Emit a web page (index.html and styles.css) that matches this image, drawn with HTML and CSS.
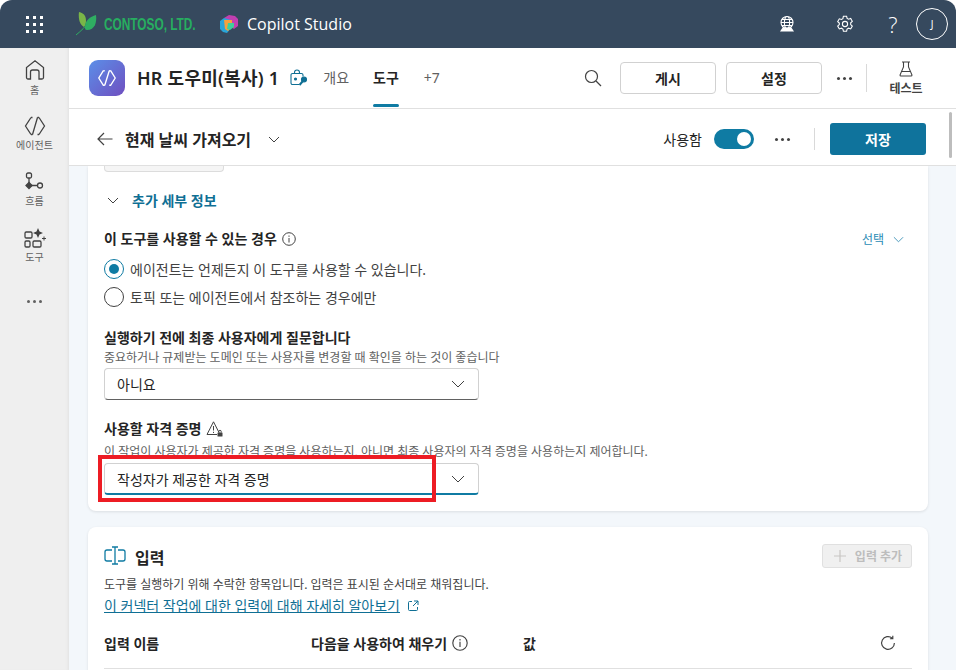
FILE: index.html
```html
<!DOCTYPE html>
<html lang="ko">
<head>
<meta charset="utf-8">
<title>Copilot Studio</title>
<link rel="stylesheet" href="styles.css">
</head>
<body>
<div class="app">
  <header class="topbar">
    <div class="waffle"><i></i><i></i><i></i><i></i><i></i><i></i><i></i><i></i><i></i></div>
    <svg class="leaf" width="22" height="26" viewBox="0 0 22 26"><path d="M3 1c5 1 7 4 7 9 0 3-1 5-2 6C4 14 2 8 3 1z" fill="#7ab648"/><path d="M20 4c1 7-1 15-9 15-2 0-2-1-2-3 0-7 5-10 11-12z" fill="#2fae62"/><path d="M0 24C5 20 10 15 15 9" stroke="#2fae62" stroke-width="1" fill="none"/></svg>
    <span class="contoso"><span>CONTOSO, LTD.</span></span>
    <svg class="cs-logo" width="18" height="18" viewBox="0 0 18 18"><path d="M4 3l5-3 6 1 3 3v7l-4 3-5-4z" fill="#c13fb0"/><path d="M0 6l4-3 7 2v8l-4 5-4-1-3-3z" fill="#2aa5d8"/><path d="M4 5h8v7l-4 4-3-2z" fill="#f7a03c"/><path d="M8 8h6v4l-4 3-3-1z" fill="#3fcf9a"/></svg>
    <span class="product">Copilot Studio</span>
    <div class="top-actions">
      <svg class="t-globe" width="18" height="18" viewBox="0 0 18 18" fill="none" stroke="#fff" stroke-width="1.1"><circle cx="9" cy="7.5" r="6"/><ellipse cx="9" cy="7.5" rx="2.6" ry="6"/><path d="M3 7.5h12M4 4.5h10M4 10.5h10"/><path d="M3 16h12l-2-3H5z" fill="#fff"/></svg>
      <svg class="t-gear" width="18" height="18" viewBox="0 0 18 18" fill="none" stroke="#fff" stroke-width="1.1"><path d="M7.4 1.2h3.2l.5 2.2 1.5.8 2.1-.7 1.6 2.8-1.6 1.5v1.8l1.6 1.5-1.6 2.8-2.1-.7-1.5.8-.5 2.2H7.4l-.5-2.2-1.5-.8-2.1.7-1.6-2.8 1.6-1.5V8.1L1.7 6.6l1.6-2.8 2.1.7 1.5-.8z"/><circle cx="9" cy="9" r="2.6"/></svg>
      <span class="t-help">?</span>
      <span class="avatar">J</span>
    </div>
  </header>
  <div class="below">
    <nav class="rail">
      <div class="rail-item home"><svg width="22" height="22" viewBox="0 0 22 22" fill="none" stroke="#424242" stroke-width="1.3"><path d="M2.5 18.5V8.6L11 1.8l8.500 6.800v9.900a1.500 1.500 0 0 1-1.500 1.500h-3V13a2 2 0 0 0-2-2H8.500a2 2 0 0 0-2 2v7H4a1.500 1.500 0 0 1-1.500-1.500z"/></svg><span>홈</span></div>
      <div class="rail-item"><svg width="22" height="20" viewBox="0 0 22 20" fill="none" stroke="#424242" stroke-width="1.3"><path d="M7 1.500 1.500 10 7 18.500M15 1.500 20.500 10 15 18.500M13.500 1.500 8.500 18.500M7 1.500h1.500M13.500 1.500H15M7 18.500h1.500M13.500 18.500H15"/></svg><span>에이전트</span></div>
      <div class="rail-item"><svg width="20" height="20" viewBox="0 0 20 20" fill="none" stroke="#424242" stroke-width="1.300"><rect x="1.500" y="1" width="5" height="5" rx="1.500"/><path d="M4 6v5.500M6 13.500h6"/><rect x="12.500" y="11" width="5" height="5" rx="2.500"/><path d="M4 10.500l3 3-3 3-3-3z" fill="#424242"/></svg><span>흐름</span></div>
      <div class="rail-item"><svg width="22" height="20" viewBox="0 0 22 20" fill="none" stroke="#424242" stroke-width="1.300"><rect x="1" y="4" width="7" height="6" rx="1.200"/><rect x="1" y="13" width="5" height="6" rx="1.200"/><rect x="9" y="13" width="8" height="6" rx="1.200"/><path d="M14 0l1.500 3.500L19 5l-3.500 1.500L14 10l-1.500-3.500L9 5l3.500-1.500z" fill="#424242" stroke="none"/><path d="M20 8.500v4M18 10.500h4" stroke-width="1"/></svg><span>도구</span></div>
      <div class="rail-more"><i></i><i></i><i></i></div>
    </nav>
    <main class="main">
      <section class="agentbar">
        <div class="agent-logo"><svg width="20" height="20" viewBox="0 0 22 20" fill="none" stroke="#fff" stroke-width="1.500"><path d="M7 2 2 10l5 8h1.500M15 2l5 8-5 8h-1.500M13.500 2 8.500 18M7 2h1.500M13.500 2H15"/></svg></div>
        <h1 class="agent-name">HR 도우미(복사) 1</h1>
        <svg class="agent-lock" width="18" height="18" viewBox="0 0 18 18" fill="none" stroke="#0f6f94" stroke-width="1.100"><path d="M4.500 4.500V3.500a2.500 2.500 0 0 1 5 0v1M9 15.500H2.500a1.500 1.500 0 0 1-1.500-1.500V6a1.500 1.500 0 0 1 1.500-1.500h9A1.500 1.500 0 0 1 13 6v1.500"/><circle cx="5.500" cy="10" r="1" fill="#0f6f94"/><circle cx="14" cy="10.500" r="2.500" fill="#0f6f94"/><path d="M12.500 12.500 9.500 16" stroke-width="2"/></svg>
        <a class="tab">개요</a>
        <a class="tab tab-active">도구</a>
        <a class="tab">+7</a>
        <div class="agent-actions">
          <svg class="search" width="18" height="18" viewBox="0 0 18 18" fill="none" stroke="#424242" stroke-width="1.200"><circle cx="7.500" cy="7.500" r="6"/><path d="M12 12l5 5"/></svg>
          <button class="btn">게시</button>
          <button class="btn">설정</button>
          <div class="dots dark"><i></i><i></i><i></i></div>
          <div class="vr"></div>
          <div class="test"><svg width="16" height="16" viewBox="0 0 16 16" fill="none" stroke="#424242" stroke-width="1.100"><path d="M4 1h8M5.500 1v5L2 14a1 1 0 0 0 1 1h10a1 1 0 0 0 1-1l-3.500-8V1M4 10.500h8"/></svg><span>테스트</span></div>
        </div>
      </section>
      <section class="subbar">
        <svg class="back" width="16" height="14" viewBox="0 0 16 14" fill="none" stroke="#424242" stroke-width="1.200"><path d="M15.500 7H1M7 1 1 7l6 6"/></svg>
        <span class="sub-title">현재 날씨 가져오기</span>
        <svg class="chev sub-chev" width="12" height="7" viewBox="0 0 12 7"><path d="M1 1l5 5 5-5"/></svg>
        <div class="sub-actions">
          <span class="enabled">사용함</span>
          <span class="toggle"><i></i></span>
          <div class="dots dark"><i></i><i></i><i></i></div>
          <div class="vr short"></div>
          <button class="save">저장</button>
        </div>
      </section>
      <div class="content">
        <section class="card card-first">
          <div class="stub"></div>
          <div class="more-row">
            <svg class="chev" width="12" height="7" viewBox="0 0 12 7"><path d="M1 1l5 5 5-5"/></svg>
            <span>추가 세부 정보</span>
          </div>
          <div class="when-row">
            <span class="label">이 도구를 사용할 수 있는 경우</span>
            <svg class="info" width="14" height="14" viewBox="0 0 14 14" fill="none" stroke="#424242"><circle cx="7" cy="7" r="6.300"/><path d="M7 6v4.500M7 3.500v1.300"/></svg>
            <span class="choose">선택</span>
            <svg class="chev teal" width="11" height="7" viewBox="0 0 12 7"><path d="M1 1l5 5 5-5"/></svg>
          </div>
          <div class="radio-row first"><span class="radio on"></span><span>에이전트는 언제든지 이 도구를 사용할 수 있습니다.</span></div>
          <div class="radio-row"><span class="radio"></span><span>토픽 또는 에이전트에서 참조하는 경우에만</span></div>
          <div class="label ask">실행하기 전에 최종 사용자에게 질문합니다</div>
          <div class="hint">중요하거나 규제받는 도메인 또는 사용자를 변경할 때 확인을 하는 것이 좋습니다</div>
          <div class="select"><span>아니요</span><svg class="chev" width="14" height="8" viewBox="0 0 14 8"><path d="M1 1l6 6 6-6"/></svg></div>
          <div class="cred-label">
            <span class="label">사용할 자격 증명</span>
            <svg width="18" height="18" viewBox="0 0 18 18" fill="none" stroke="#424242"><path d="M7.500 1.800 1 14.500h10M7.500 1.800 13 12.500M7.500 6v4.500M7.500 11.800v1.200"/><rect x="11.500" y="12.500" width="5" height="4" rx=".5" fill="#424242" stroke="none"/><path d="M12.800 12.500v-1a1.200 1.200 0 0 1 2.400 0v1"/></svg>
          </div>
          <div class="hint second">이 작업이 사용자가 제공한 자격 증명을 사용하는지, 아니면 최종 사용자의 자격 증명을 사용하는지 제어합니다.</div>
          <div class="select focused"><span>작성자가 제공한 자격 증명</span><svg class="chev" width="14" height="8" viewBox="0 0 14 8"><path d="M1 1l6 6 6-6"/></svg></div>
          <div class="redbox"></div>
        </section>
        <section class="card card-second">
          <div class="in-head">
            <svg width="22" height="20" viewBox="0 0 22 20" fill="none" stroke="#0f7ba3" stroke-width="1.300"><path d="M8 4H3a2 2 0 0 0-2 2v7a2 2 0 0 0 2 2h5M14 4h5a2 2 0 0 1 2 2v7a2 2 0 0 1-2 2h-5M11 1v17M8 1h6M8 18h6"/></svg>
            <h2>입력</h2>
            <button class="add" disabled><svg width="12" height="12" viewBox="0 0 12 12" stroke="#c8c6c4" stroke-width="1.200"><path d="M6 0v12M0 6h12"/></svg><span>입력 추가</span></button>
          </div>
          <p class="in-desc">도구를 실행하기 위해 수락한 항목입니다. 입력은 표시된 순서대로 채워집니다.</p>
          <p class="in-link"><a>이 커넥터 작업에 대한 입력에 대해 자세히 알아보기</a><svg width="12" height="12" viewBox="0 0 12 12" fill="none" stroke="#0f6f94"><path d="M5 1.500H2.500a1 1 0 0 0-1 1v7a1 1 0 0 0 1 1h7a1 1 0 0 0 1-1V7M7 1h4v4M11 1 6 6"/></svg></p>
          <div class="table-head">
            <span class="c1">입력 이름</span>
            <span class="c2">다음을 사용하여 채우기<svg width="16" height="16" viewBox="0 0 14 14" fill="none" stroke="#424242"><circle cx="7" cy="7" r="6.300"/><path d="M7 6v4.500M7 3.500v1.300"/></svg></span>
            <span class="c3">값</span>
            <svg class="refresh" width="16" height="16" viewBox="0 0 15 15" fill="none" stroke="#424242" stroke-width="1.100"><path d="M13.500 7.500a6 6 0 1 1-2-4.500M12 .8V3.500H9.300"/></svg>
          </div>
        </section>
      </div>
      <div class="thumb"></div>
    </main>
  </div>
</div>
</body>
</html>
```
FILE: styles.css
```css
* { box-sizing: border-box; }
html, body { margin: 0; height: 100%; background: #fff; overflow: hidden; }
body { font-family: "Noto Sans", "Noto Sans CJK KR", sans-serif; font-size: 14px; color: #242424; }
h1, h2, p { margin: 0; }
button { font-family: inherit; }
.app { width: 956px; height: 670px; display: flex; flex-direction: column; border-radius: 12px 12px 0 0; overflow: hidden; }

.topbar { flex: 0 0 48px; background: #36495e; display: flex; align-items: center; color: #fff; }
.waffle { display: grid; grid-template-columns: repeat(3, 3px); gap: 4px; margin-left: 26px; }
.waffle i { width: 3px; height: 3px; background: #fff; }
.leaf { margin-left: 33px; }
.contoso { margin-left: 6px; width: 90px; display: block; overflow: visible; white-space: nowrap; }
.contoso span { display: inline-block; font-family: "Liberation Sans", sans-serif; font-weight: 700; font-size: 16px; color: #27ae60; transform: scaleX(.74); transform-origin: left center; }
.cs-logo { margin-left: 26px; }
.product { margin-left: 9px; font-family: "Open Sans", sans-serif; font-weight: 500; font-size: 16px; }
.top-actions { margin-left: auto; display: flex; align-items: center; }
.t-gear { margin-left: 40px; }
.t-help { width: 12px; margin-left: 33px; text-align: center; font-family: "Open Sans", sans-serif; font-size: 22px; font-weight: 300; line-height: 1; }
.avatar { width: 32px; height: 32px; margin: 0 8px 0 17px; border: 1px solid #fff; border-radius: 50%; display: flex; align-items: center; justify-content: center; font-size: 10px; }

.below { flex: 1; display: flex; min-height: 0; }
.rail { flex: 0 0 69px; background: #efefef; box-shadow: inset -3px 0 3px -2px #e2e2e2; display: flex; flex-direction: column; align-items: center; padding-top: 11px; }
.rail-item { display: flex; flex-direction: column; align-items: center; height: 56px; }
.rail-item.home { height: 57px; }
.rail-item span { font-size: 10px; line-height: 14px; color: #616161; margin-top: 2px; }
.rail-more { display: flex; gap: 3px; margin-top: 16px; }
.rail-more i { width: 3px; height: 3px; background: #616161; border-radius: 50%; }

.main { flex: 1; min-width: 0; display: flex; flex-direction: column; position: relative; }
.agentbar { flex: 0 0 61px; display: flex; align-items: center; padding-left: 20px; border-bottom: 1px solid #e0e0e0; }
.agent-logo { width: 36px; height: 36px; border-radius: 9px; background: linear-gradient(135deg, #5b8fe8, #6f4fc0); display: flex; align-items: center; justify-content: center; }
.agent-name { margin-left: 12px; font-size: 18px; font-weight: 600; line-height: 24px; letter-spacing: .25px; white-space: nowrap; }
.agent-lock { margin-left: 11px; }
.tab { height: 60px; margin-left: 15px; display: flex; align-items: center; color: #616161; font-size: 14px; padding-bottom: 2px; }
.tab-active { color: #242424; font-weight: 700; position: relative; margin-left: 24px; }
.tab-active::after { content: ""; position: absolute; left: 0; right: 0; bottom: 1px; height: 3px; border-radius: 2px; background: #0f7ba3; }
.tab:last-of-type { margin-left: 25px; }
.agent-actions { margin-left: auto; display: flex; align-items: center; }
.search { margin-right: 18px; }
.btn { width: 96px; height: 32px; margin-right: 10px; background: #fff; border: 1px solid #d1d1d1; border-radius: 4px; font-size: 14px; font-weight: 700; color: #242424; }
.dots { display: flex; gap: 3px; }
.dots.dark { margin-left: 5px; }
.dots i { width: 3px; height: 3px; background: #424242; border-radius: 50%; }
.vr { width: 1px; height: 28px; background: #d9d9d9; margin-left: 14px; }
.vr.short { height: 22px; margin-left: 24px; }
.test { width: 56px; margin: 0 22px 0 11px; padding-top: 1px; display: flex; flex-direction: column; align-items: center; font-size: 12px; font-weight: 600; color: #424242; line-height: 16px; }
.test svg { margin-bottom: 4px; }

.subbar { flex: 0 0 57px; display: flex; align-items: center; padding: 4px 0 0 28px; border-bottom: 1px solid #e0e0e0; }
.sub-title { margin-left: 12px; font-size: 16px; font-weight: 600; }
.chev { fill: none; stroke: #424242; stroke-width: 1; }
.chev.teal { stroke: #3f93b7; margin-left: 9px; }
.sub-chev { margin-left: 17px; }
.sub-actions { margin-left: auto; display: flex; align-items: center; }
.enabled { font-size: 14px; color: #242424; }
.toggle { width: 40px; height: 20px; margin-left: 12px; background: #0f7ba3; border-radius: 10px; position: relative; display: block; }
.toggle i { position: absolute; right: 3px; top: 3px; width: 14px; height: 14px; border-radius: 50%; background: #fff; }
.sub-actions .dots { margin-left: 21px; }
.save { width: 96px; height: 32px; margin: 0 30px 0 15px; background: #0f739c; color: #fff; border: 0; border-radius: 3px; font-size: 14px; font-weight: 700; }

.content { flex: 1; min-height: 0; overflow: hidden; background: #f3f7fb; padding: 0 28px 0 19px; }
.card { background: #fff; position: relative; padding: 0 16px; box-shadow: 0 1px 3px rgba(0,0,0,.1); }
.card-first { height: 345px; border-radius: 0 0 8px 8px; }
.card-second { height: 200px; margin-top: 16px; border-radius: 8px; padding-top: 17px; }
.stub { width: 120px; height: 6px; background: #f5f5f5; border: 1px solid #dcdcdc; border-top: 0; border-radius: 0 0 4px 4px; }
.more-row { display: flex; align-items: center; height: 20px; margin-top: 18px; padding-left: 3px; }
.more-row span { margin-left: 13px; font-size: 14px; font-weight: 700; color: #0f6f94; }
.label { font-size: 14px; font-weight: 700; line-height: 18px; }
.when-row { display: flex; align-items: center; margin-top: 20px; height: 18px; }
.when-row .info { margin-left: 5px; }
.choose { margin-left: auto; font-size: 12px; color: #2a8bb5; }
.when-row .chev { margin-right: 8px; }
.radio-row { display: flex; align-items: center; height: 22px; margin-top: 6px; font-size: 14px; color: #424242; }
.radio-row.first { margin-top: 10px; }
.radio { width: 20px; height: 20px; border-radius: 50%; border: 1px solid #424242; margin-right: 6px; flex: none; position: relative; }
.radio.on { border-color: #0f7ba3; }
.radio.on::after { content: ""; position: absolute; inset: 4px; border-radius: 50%; background: #0f7ba3; }
.ask { margin-top: 21px; }
.hint { font-size: 12px; line-height: 16px; color: #616161; margin-top: 3px; white-space: nowrap; }
.hint.second { margin-top: 6px; }
.select { width: 375px; height: 32px; margin-top: 2px; border: 1px solid #d1d1d1; border-bottom-color: #616161; border-radius: 4px; display: flex; align-items: center; justify-content: space-between; padding: 0 13px 0 12px; font-size: 14px; color: #242424; }
.select.focused { border-bottom: 2px solid #0f7ba3; margin-top: 3px; }
.cred-label { display: flex; align-items: center; gap: 5px; margin-top: 20px; height: 18px; }
.redbox { position: absolute; left: 10px; top: 289px; width: 338px; height: 47px; border: 4px solid #ed1c24; }

.in-head { display: flex; align-items: center; height: 24px; }
.in-head h2 { margin-left: 9px; padding-top: 1px; font-size: 16px; font-weight: 700; }
.add { margin-left: auto; width: 90px; height: 24px; padding-left: 8px; display: flex; align-items: center; justify-content: center; gap: 9px; background: #f0f0f0; border: 1px solid #e0e0e0; border-radius: 3px; color: #bdbdbd; font-size: 12px; font-weight: 700; }
.in-desc { margin-top: 8px; font-size: 12px; line-height: 18px; color: #424242; }
.in-link { margin-top: 3px; display: flex; align-items: center; gap: 7px; font-size: 14px; line-height: 18px; }
.in-link a { color: #0f6f94; text-decoration: underline; }
.table-head { position: relative; display: flex; align-items: center; height: 24px; margin-top: 16px; font-size: 14px; font-weight: 700; }
.table-head::after { content: ""; position: absolute; left: 0; right: 0; top: 37px; height: 1px; background: #e0e0e0; }
.c1 { width: 207px; }
.c2 { width: 212px; display: flex; align-items: center; gap: 5px; }
.refresh { margin-left: auto; margin-right: 16px; }
.thumb { position: absolute; right: 4px; top: 64px; width: 3px; height: 46px; border-radius: 2px; background: #bdbdbd; }
```
